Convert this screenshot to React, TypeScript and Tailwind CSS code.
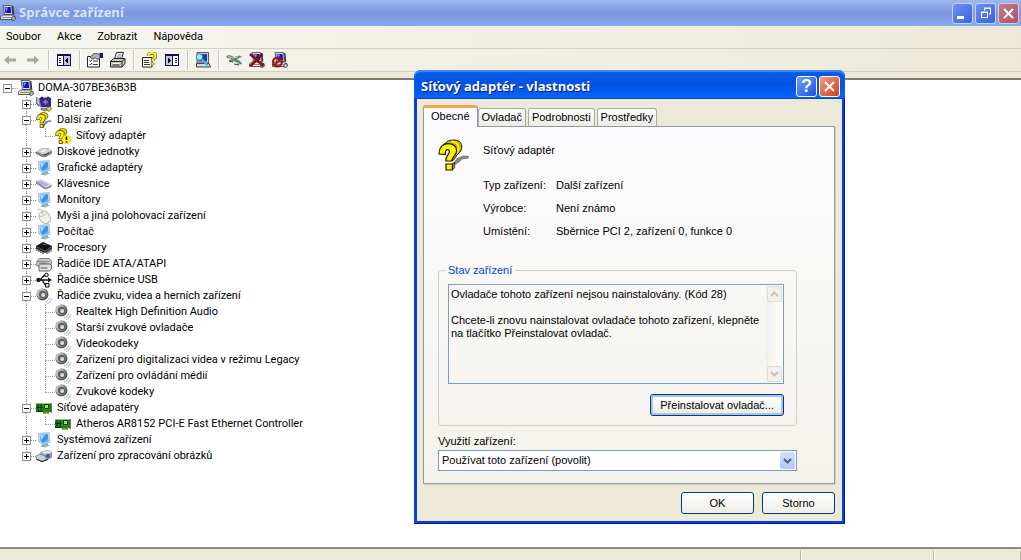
import React from 'react';

type IconProps = { children: React.ReactNode; size?: number };

const Icon: React.FC<IconProps> = ({ children, size = 16 }) => (
  <svg width={size} height={size} viewBox="0 0 16 16" className="shrink-0" aria-hidden="true">
    {children}
  </svg>
);

const ComputerShape = () => (
  <>
    <path d="M3 .5h8.500l1 9H4.500z" fill="#dcdcd4" stroke="#444" strokeWidth=".8" />
    <path d="M4.500 2h6l.7 6H5.500z" fill="#1010d0" />
    <path d="M5 2.500h3l-1.500 4z" fill="#7c9cff" />
    <path d="M12 .8l1.500.7.8 8-1.600.3z" fill="#333" />
    <path d="M0.500 12l2-2h10l2 1.500v2L13 14.500H.5z" fill="#e8e8e0" stroke="#333" strokeWidth=".8" />
    <path d="M2 12.500h9" stroke="#888" />
    <path d="M12 12l3-.5.5 2.500-2 1.500-2-.5z" fill="#bbb" stroke="#222" strokeWidth=".7" />
  </>
);

const ComputerIcon = () => (
  <Icon>
    <ComputerShape />
  </Icon>
);

const BatteryIcon = () => (
  <Icon>
    <path d="M.8 1v6.500L3 10" stroke="#556" strokeWidth="1.200" fill="none" />
    <path d="M2.500 3l1-1 1.500 9-1.500-1z" fill="#a8b4e4" stroke="#446" strokeWidth=".5" />
    <path d="M4 2h10.500v8.500H5.500z" fill="#1c30c0" stroke="#0a1450" strokeWidth=".8" />
    <path d="M5 .8h2V2H5zM11 .8h2V2h-2z" fill="#333" />
    <path d="M9.500 3.500v5M7 6h5" stroke="#f06070" strokeWidth="1.600" />
    <path d="M5 12h5l1 2.500-3 .5-3-1.500z" fill="#9a9a9a" stroke="#444" strokeWidth=".6" />
    <path d="M10 12.500l3.500-2 2.200 2.500-3.200 2.500z" fill="#ecc840" stroke="#5a4a10" strokeWidth=".7" />
  </Icon>
);

const QuestionShape = () => (
  <>
    <path d="M7.500 12.200l2-2.700 3-1.300 3 .3-.2 1.300-3.300.4-1.500 1.500-2 1.300z" fill="#858585" />
    <path
      d="M1.600 4L4.600 1.300C5.800.4 8.800.2 10.600 1.200 12.200 2.200 12.200 4.500 11.300 6 10.500 7.200 9 8 8.800 9.300L7.200 11 7 7l2-3z"
      fill="#c8b800"
      stroke="#1c1800"
      strokeWidth=".5"
    />
    <path d="M6.500 1.200c2 0 3.800 1.200 3.800 3.500 0 1.800-1.700 2.700-2.300 4" stroke="#fff200" strokeWidth="1" fill="none" />
    <path
      d="M.5 7.500C.5 4.200 2.200 2.300 5 2.300c2.800 0 4.300 1.500 4.300 3.600 0 2.600-2.400 3-2.400 5.100H3.900c0-2.700 1.800-3.300 1.800-4.700 0-.7-.4-1-.9-1-.9 0-1.200.9-1.200 2.500z"
      fill="#fff200"
      stroke="#1c1800"
      strokeWidth=".6"
    />
    <path d="M7 12.600l1.300-.9v2.700L7 15.500z" fill="#b8a800" stroke="#1c1800" strokeWidth=".4" />
    <path d="M4 12.500h3.200v3H4z" fill="#fff200" stroke="#1c1800" strokeWidth=".6" />
  </>
);

const QuestionIcon = () => (
  <Icon>
    <QuestionShape />
  </Icon>
);

const UnknownDeviceIcon = () => (
  <Icon>
    <QuestionShape />
    <circle cx="11.500" cy="11.500" r="4.300" fill="#ffee20" stroke="#e0d000" strokeWidth=".5" />
    <path d="M11.500 8.500v3.600M11.500 13.200v1.500" stroke="#111" strokeWidth="1.500" />
  </Icon>
);

const DiskIcon = () => (
  <Icon>
    <path d="M0 8l6-4h6l4 3v2.500l-6 3.500H6L0 10z" fill="#808080" />
    <path d="M0.500 7.500L6 4.200h6l3.500 2.600L10 10H6z" fill="#d0d0d0" />
    <path d="M4 7.200l4-1.700 3 .7-4 2z" fill="#f4f4f4" />
    <path d="M8 11.300l5-2.600" stroke="#333" />
  </Icon>
);

const MonitorIcon = () => (
  <Icon>
    <path d="M6 11l6-1v2.500l1.500 1-4.500 2-5-1 2.500-1.500z" fill="#9fa8b6" />
    <path d="M2.500 1.500L13 .5l1 10L6 12.500 3 10z" fill="#cfe2f4" stroke="#88a6c8" strokeWidth=".7" />
    <path d="M4 2.800l7.800-.8.7 7.500-6 1.500L4.500 9z" fill="#3a94e8" />
    <path d="M4.300 3l5-.5L5 8z" fill="#a8dcff" />
    <path d="M8 10l4-3.500v2.700z" fill="#60b8f4" />
  </Icon>
);

const KeyboardIcon = () => (
  <Icon>
    <path d="M0 5l5-1.500L16 9l-1 2.500-6 2L0 7.500z" fill="#8c88b0" />
    <path d="M0 5l5-1.500L16 9l-6 2.500z" fill="#dcdaf0" />
    <path d="M2 5.500l9 4.500M4 5l9 4.500M5 7.500l3-1M8 9l3-1.200M3 6.500l3-1.200" stroke="#9894c0" strokeWidth=".7" />
  </Icon>
);

const MouseIcon = () => (
  <Icon>
    <path d="M1.500 1.500c3-1 4.500 0 5 3" stroke="#aaa" fill="none" />
    <path d="M4.500 4.500c2.500-2.500 6-1.500 8 1.500s3 6.500.5 8.500-6.500 1-8.500-2-2-6 0-8z" fill="#f4f2ec" stroke="#a8a49c" />
    <path d="M4 8.500c2.500 0 6-1.500 7-4M7.500 7L6 4" stroke="#bbb6ac" fill="none" strokeWidth=".8" />
  </Icon>
);

const ChipIcon = () => (
  <Icon>
    <path d="M0 6l7-4 9 4-7 5z" fill="#111" />
    <path d="M0 6l9 5 7-5v2.500L9 13 0 8.500z" fill="#333" />
    <path d="M1 8v3M3 9v3M5 10v3M7 11v3M11 11v3M13 10v3M15 8.500v3" stroke="#111" />
    <path d="M6 5l3-1 2 1" stroke="#777" fill="none" strokeWidth=".7" />
  </Icon>
);

const IdeIcon = () => (
  <Icon>
    <path d="M.8 5.500L3.500 2.500h9.500l2.300 2v4l-2 1.500H.8z" fill="#c8c8c4" stroke="#666" strokeWidth=".8" />
    <path d="M1 5.500h12.500M3 7.200h8" stroke="#777" strokeWidth=".8" />
    <path d="M3 9.500L4.500 8h9l2 1v4L13 15H3z" fill="#e2e2dc" stroke="#444" strokeWidth=".8" />
    <path d="M4.500 12h7" stroke="#555" />
  </Icon>
);

const UsbIcon = () => (
  <Icon>
    <path d="M1 8h12M4 8l4-4.500h2M6 8l3 4.500h2" stroke="#111" strokeWidth="1.300" fill="none" />
    <circle cx="2.500" cy="8" r="2.300" fill="#222" />
    <path d="M12 5.500L16 8l-4 2.500z" fill="#111" />
    <circle cx="10.500" cy="3" r="1.800" fill="#ddd" stroke="#111" />
    <path d="M9.500 11.500h3.500V15H9.500z" fill="#ddd" stroke="#111" />
  </Icon>
);

const SoundIcon = () => (
  <Icon>
    <ellipse cx="6.500" cy="6.500" rx="6" ry="6" fill="#5e5e5e" />
    <ellipse cx="5.600" cy="5.800" rx="4.800" ry="5" fill="#c4c4c4" />
    <ellipse cx="6.600" cy="6.600" rx="3.800" ry="4" fill="#666" />
    <circle cx="7.200" cy="7" r="2" fill="#dcdcdc" />
    <path d="M9 14c2.500-.3 4-2 4.500-4.500M11 15.500c2.500-.5 4-2.500 4.500-5" stroke="#a4a4ec" fill="none" />
  </Icon>
);

const NetworkIcon = () => (
  <Icon>
    <path d="M0 3.500h15v8.500h-2v2H7v-2H0z" fill="#1d8a1d" />
    <path d="M2 4v7M5 4v7M0 7.500h7M0 11.500h7" stroke="#063006" />
    <path d="M8.500 4.500h4v4h-4z" fill="#a8dc5a" stroke="#0b400b" />
    <path d="M15.200 3v10" stroke="#333" />
    <path d="M7.500 12.500h5v1.500h-5z" fill="#c8b028" />
  </Icon>
);

const CameraIcon = () => (
  <Icon>
    <path d="M5 4l7-1.500 3.500 2v5L8 13l-4-1z" fill="#9aa8b8" stroke="#667" strokeWidth=".7" />
    <path d="M5 4l7-1.500 3.500 2-7 1.500z" fill="#e8ecf0" />
    <path d="M0 8l4-2 6 2.500v3L6 14 0 11z" fill="#ccd0d8" stroke="#666" strokeWidth=".7" />
    <circle cx="12" cy="8" r="2" fill="#3858a0" />
    <path d="M0.500 11l5.500 2.500 6-2" stroke="#222" fill="none" />
  </Icon>
);

/* toolbar drawings */

const BackIcon = () => (
  <Icon>
    <path d="M2 8l5-4.500v3h7v3H7v3z" fill="#aca899" />
  </Icon>
);

const ForwardIcon = () => (
  <Icon>
    <path d="M14 8L9 3.500v3H2v3h7v3z" fill="#aca899" />
  </Icon>
);

const TreePaneIcon = () => (
  <Icon>
    <g shapeRendering="crispEdges">
      <path d="M1 2h14v12H1z" fill="#101060" />
      <path d="M2 4h5v9H2z" fill="#fff" />
      <path d="M8 4h6v9H8z" fill="#c8c8d8" />
      <path d="M3 6h2v1H3zM3 8h2v1H3zM3 10h2v1H3z" fill="#101060" />
    </g>
    <path d="M12 5.500v6L9 8.500z" fill="#000" />
  </Icon>
);

const ActionPaneIcon = () => (
  <Icon>
    <g shapeRendering="crispEdges">
      <path d="M1 2h14v12H1z" fill="#101060" />
      <path d="M2 4h6v9H2z" fill="#c8c8d8" />
      <path d="M9 4h5v9H9z" fill="#fff" />
      <path d="M11 6h2v1h-2zM11 8h2v1h-2zM11 10h2v1h-2z" fill="#101060" />
    </g>
    <path d="M4 5.500v6l3-3z" fill="#000" />
  </Icon>
);

const PropertiesIcon = () => (
  <Icon>
    <path d="M.5 4.500h12v10.500H.5z" fill="#fff" stroke="#222" />
    <path d="M2.500 8.500l1 1 1.500-2M2.500 12l1 1 1.500-2M6 9h5M6 12.500h5" stroke="#222" fill="none" strokeWidth=".9" />
    <path d="M3 5l4-3.500 6 .5v4l-2 1.500L8.500 6 5 7z" fill="#b4b4ac" stroke="#333" strokeWidth=".8" />
    <path d="M13 1h3v5h-3z" fill="#141490" />
  </Icon>
);

const PrintIcon = () => (
  <Icon>
    <path d="M4.500 7l2-6.500h7L11.500 7z" fill="#fff" stroke="#222" />
    <path d="M7.500 3h4M6.500 5h4.500" stroke="#555" strokeWidth=".8" />
    <path d="M.5 9.500l3-3h11.500v5L12 15H.5z" fill="#c8c8b8" stroke="#222" />
    <path d="M.5 9.500H12l3-3M12 9.500V15M2.500 13h7" stroke="#222" fill="none" />
    <path d="M2.500 11.500h7" stroke="#f4f4f0" />
  </Icon>
);

const HelpIcon = () => (
  <Icon>
    <path d="M1.500 5.500h9.500V15H1.500z" fill="#fff" stroke="#222" />
    <path d="M3 8.500h5M3 10.500h5M3 12.500h6" stroke="#222" strokeWidth=".9" />
    <path d="M7.500 4c0-4 7-4 7 0 0 2.500-3 2.500-3 5M11.500 10.500v2.500" stroke="#5c5400" strokeWidth="3.400" fill="none" />
    <path d="M7.500 4c0-4 7-4 7 0 0 2.500-3 2.500-3 5M11.500 10.800v2" stroke="#ffee10" strokeWidth="2.200" fill="none" />
  </Icon>
);

const ScanIcon = () => (
  <Icon>
    <path d="M2 .5h11.500v10.500H2z" fill="#d4d4c8" stroke="#556" />
    <path d="M3.500 2h8.500v7.500H3.500z" fill="#1838c0" />
    <path d="M1.500 11.500h12.500l1.500 3.500H1.500z" fill="#d8d8cc" stroke="#444" />
    <circle cx="4.500" cy="5" r="3.200" fill="#a8ecff" stroke="#208cb8" />
    <path d="M7 7.500l5.500 6" stroke="#48b8e0" strokeWidth="2.200" />
  </Icon>
);

const UpdateIcon = () => (
  <Icon>
    <path d="M0 4l4-1 4 2 6-1.500 2 1.500-5 2 4 3 1 2-3 .5-5-3-4 .5-1-2 3-1-5-1z" fill="#6d8468" />
    <path d="M2 4.500l4 1.500 6-1M7 9l6 2.500" stroke="#c8d4c0" fill="none" />
    <path d="M8 12l5 1M3 9l4 1" stroke="#39443a" />
  </Icon>
);

const UninstallIcon = () => (
  <Icon>
    <ComputerShape />
    <path d="M1 2l13.500 12M13.500 2L1.500 14" stroke="#8c0c14" strokeWidth="2.600" />
  </Icon>
);

const DisableIcon = () => (
  <Icon>
    <ComputerShape />
    <circle cx="5.500" cy="10" r="4.400" fill="none" stroke="#a01018" strokeWidth="2.200" />
    <path d="M2.500 13l6-6" stroke="#a01018" strokeWidth="2" />
  </Icon>
);

type DeviceNode = {
  name: string;
  icon: React.FC;
  expanded?: boolean;
  children?: DeviceNode[];
};

const devices: DeviceNode[] = [
  { name: 'Baterie', icon: BatteryIcon },
  {
    name: 'Další zařízení',
    icon: QuestionIcon,
    expanded: true,
    children: [{ name: 'Síťový adaptér', icon: UnknownDeviceIcon }],
  },
  { name: 'Diskové jednotky', icon: DiskIcon },
  { name: 'Grafické adaptéry', icon: MonitorIcon },
  { name: 'Klávesnice', icon: KeyboardIcon },
  { name: 'Monitory', icon: MonitorIcon },
  { name: 'Myši a jiná polohovací zařízení', icon: MouseIcon },
  { name: 'Počítač', icon: MonitorIcon },
  { name: 'Procesory', icon: ChipIcon },
  { name: 'Řadiče IDE ATA/ATAPI', icon: IdeIcon },
  { name: 'Řadiče sběrnice USB', icon: UsbIcon },
  {
    name: 'Řadiče zvuku, videa a herních zařízení',
    icon: SoundIcon,
    expanded: true,
    children: [
      { name: 'Realtek High Definition Audio', icon: SoundIcon },
      { name: 'Starší zvukové ovladače', icon: SoundIcon },
      { name: 'Videokodeky', icon: SoundIcon },
      { name: 'Zařízení pro digitalizaci videa v režimu Legacy', icon: SoundIcon },
      { name: 'Zařízení pro ovládání médií', icon: SoundIcon },
      { name: 'Zvukové kodeky', icon: SoundIcon },
    ],
  },
  {
    name: 'Síťové adapatéry',
    icon: NetworkIcon,
    expanded: true,
    children: [{ name: 'Atheros AR8152 PCI-E Fast Ethernet Controller', icon: NetworkIcon }],
  },
  { name: 'Systémová zařízení', icon: MonitorIcon },
  { name: 'Zařízení pro zpracování obrázků', icon: CameraIcon },
];

const Expander: React.FC<{ expanded?: boolean }> = ({ expanded }) => (
  <button
    type="button"
    aria-label={expanded ? 'Sbalit' : 'Rozbalit'}
    className="relative flex size-[9px] shrink-0 items-center justify-center border border-[#8f8f86] bg-white"
  >
    <span className="h-px w-[5px] bg-black" />
    {!expanded && <span className="absolute h-[5px] w-px bg-black" />}
  </button>
);

// One 19px step of the dotted guide lines in front of a row
const Guide: React.FC<{ last?: boolean; children?: React.ReactNode }> = ({ last, children }) => (
  <span className="relative flex h-4 w-[19px] shrink-0 items-center justify-center">
    <span
      className={`absolute left-[9px] top-0 border-l border-dotted border-[#a0a098] ${last ? 'h-2' : 'h-4'}`}
    />
    <span className="absolute left-[9px] right-0 top-2 border-t border-dotted border-[#a0a098]" />
    {children}
  </span>
);

const DeviceTree = () => (
  <ul className="text-[11px] leading-4 text-black">
    <li>
      <div className="flex h-4 items-center pl-[3px]">
        <Expander expanded />
        <span className="w-[6px] border-t border-dotted border-[#a0a098]" />
        <ComputerIcon />
        <span className="whitespace-nowrap pl-1">DOMA-307BE36B3B</span>
      </div>
      <ul className="pl-[17px]">
        {devices.map((device, i) => {
          const last = i === devices.length - 1;
          return (
            <li key={device.name}>
              <div className="flex h-4 items-center">
                <Guide last={last}>
                  <Expander expanded={device.expanded} />
                </Guide>
                <device.icon />
                <span className="whitespace-nowrap pl-[5px]">{device.name}</span>
              </div>
              {device.children && (
                <ul className="ml-[9px] border-l border-dotted border-[#a0a098] pl-[9px]">
                  {device.children.map((child, j) => (
                    <li key={child.name} className="flex h-4 items-center">
                      <Guide last={j === device.children!.length - 1} />
                      <child.icon />
                      <span className="whitespace-nowrap pl-[5px]">{child.name}</span>
                    </li>
                  ))}
                </ul>
              )}
            </li>
          );
        })}
      </ul>
    </li>
  </ul>
);

const toolGroups = [
  [
    { label: 'Zpět', icon: BackIcon },
    { label: 'Vpřed', icon: ForwardIcon },
  ],
  [{ label: 'Strom konzoly', icon: TreePaneIcon }],
  [
    { label: 'Vlastnosti', icon: PropertiesIcon },
    { label: 'Tisk', icon: PrintIcon },
  ],
  [
    { label: 'Nápověda', icon: HelpIcon },
    { label: 'Podokno akcí', icon: ActionPaneIcon },
  ],
  [{ label: 'Vyhledat změny hardwaru', icon: ScanIcon }],
  [
    { label: 'Aktualizovat ovladač', icon: UpdateIcon },
    { label: 'Odinstalovat', icon: UninstallIcon },
    { label: 'Zakázat', icon: DisableIcon },
  ],
];

const Toolbar = () => (
  <div className="flex h-[23px] shrink-0 items-center border-b border-[#cfccbb] bg-linear-to-r from-[#f6f6f1] to-[#ece9d8]">
    {toolGroups.map((group, i) => (
      <div key={i} className="flex items-center">
        {i > 0 && <span className="ml-[2px] mr-1 h-[20px] w-[2px] border-l border-[#c9c6b5] bg-white" />}
        {group.map((tool) => (
          <button
            key={tool.label}
            type="button"
            aria-label={tool.label}
            className="flex h-[22px] w-[23px] items-center pl-[2px]"
          >
            <tool.icon />
          </button>
        ))}
      </div>
    ))}
  </div>
);

const CloseGlyph = () => (
  <svg width="13" height="13" viewBox="0 0 13 13" aria-hidden="true">
    <path d="M2 2l9 9M11 2l-9 9" stroke="#fff" strokeWidth="2" />
  </svg>
);

const TitleBar = () => (
  <header className="flex h-[26px] shrink-0 items-center bg-linear-to-b from-[#9db9ee] via-[#7b96e0] to-[#84abec] pr-[2px]">
    <ComputerIcon />
    <h1 className="flex-1 pl-[3px] font-['Open_Sans','Noto_Sans',sans-serif] text-[13px] font-bold text-[#d9e5fa]">
      Správce zařízení
    </h1>
    <div className="flex gap-[2px]">
      <button
        type="button"
        aria-label="Minimalizovat"
        className="flex size-[21px] items-end rounded-[3px] border border-[#c5d3f6] bg-linear-to-br from-[#6d92ee] to-[#3a62dc] pb-1 pl-1"
      >
        <span className="h-[3px] w-[7px] bg-white" />
      </button>
      <button
        type="button"
        aria-label="Obnovit"
        className="flex size-[21px] items-center justify-center rounded-[3px] border border-[#c5d3f6] bg-linear-to-br from-[#6d92ee] to-[#3a62dc]"
      >
        <svg width="12" height="12" viewBox="0 0 12 12" fill="none" stroke="#fff" aria-hidden="true">
          <path d="M1.500 5.500h6v5h-6zM1 5h7M4.500 3.500V1.500h6v5.500H9M4 1h7" />
        </svg>
      </button>
      <button
        type="button"
        aria-label="Zavřít"
        className="flex size-[21px] items-center justify-center rounded-[3px] border border-[#d5cbe8] bg-linear-to-br from-[#c07a90] to-[#ac5460]"
      >
        <CloseGlyph />
      </button>
    </div>
  </header>
);

const MenuBar = () => (
  <nav className="flex h-[23px] shrink-0 items-center gap-4 border-b border-[#d2cfbf] bg-linear-to-r from-[#f6f6f1] to-[#ece9d8] pl-[6px] text-[11px] text-black">
    <a href="#soubor">Soubor</a>
    <a href="#akce">Akce</a>
    <a href="#zobrazit">Zobrazit</a>
    <a href="#napoveda">Nápověda</a>
  </nav>
);

const tabs = ['Ovladač', 'Podrobnosti', 'Prostředky'];

const facts = [
  ['Typ zařízení:', 'Další zařízení'],
  ['Výrobce:', 'Není známo'],
  ['Umístění:', 'Sběrnice PCI 2, zařízení 0, funkce 0'],
];

const statusText =
  'Ovladače tohoto zařízení nejsou nainstalovány. (Kód 28)\n\nChcete-li znovu nainstalovat ovladače tohoto zařízení, klepněte na tlačítko Přeinstalovat ovladač.';

const buttonClass =
  'h-[22px] rounded-[3px] border border-[#003c74] bg-linear-to-b from-white to-[#eeede6] text-center';

const ScrollButton: React.FC<{ label: string; d: string }> = ({ label, d }) => (
  <button
    type="button"
    aria-label={label}
    disabled
    className="flex h-4 w-[15px] items-center justify-center rounded-[2px] border border-[#dddccf] bg-[#f1f0ea]"
  >
    <svg width="9" height="6" viewBox="0 0 9 6" fill="none" stroke="#c6c5bc" strokeWidth="2" aria-hidden="true">
      <path d={d} />
    </svg>
  </button>
);

const PropertiesDialog = () => (
  <section
    role="dialog"
    aria-labelledby="dialog-title"
    className="absolute left-[414px] top-[70px] w-[431px] rounded-t-[7px] bg-[#0a3fd8] px-[3px] pb-[3px] font-['Liberation_Sans',Arial,sans-serif] text-[11px] leading-[13px] text-black shadow-[inset_-1px_-1px_0_#001d96]"
  >
    <div className="-mx-[3px] flex h-[29px] items-center rounded-t-[7px] bg-linear-to-b from-[#0a5be8] via-[#0453e4] to-[#0566fb] pl-[7px] pr-[5px] pt-[3px] shadow-[inset_0_2px_1px_#3a8cff,inset_0_-1px_0_#0444c8]">
      <h2
        id="dialog-title"
        className="flex-1 font-['Open_Sans','Noto_Sans',sans-serif] text-[13px] font-bold text-white [text-shadow:1px_1px_#0a1883]"
      >
        Síťový adaptér - vlastnosti
      </h2>
      <div className="flex gap-[2px]">
        <button
          type="button"
          aria-label="Nápověda"
          className="size-[21px] rounded-[3px] border border-white bg-linear-to-br from-[#6f9bf8] to-[#1c4fe0] text-[18px] font-bold leading-[19px] text-white"
        >
          ?
        </button>
        <button
          type="button"
          aria-label="Zavřít"
          className="flex size-[21px] items-center justify-center rounded-[3px] border border-white bg-linear-to-br from-[#f09a80] to-[#cc3a10]"
        >
          <CloseGlyph />
        </button>
      </div>
    </div>

    <div className="bg-[#ece9d8] pb-[7px] pl-[6px] pr-[7px] pt-[6px]">
      <div role="tablist" className="flex items-end gap-[2px]">
        <button
          type="button"
          role="tab"
          aria-selected="true"
          className="relative z-10 -mb-px -mr-[2px] h-[22px] rounded-t-[3px] border border-b-0 border-t-[3px] border-[#919b9c] border-t-[#f0a848] bg-[#fcfcfe] px-[7px] pb-[2px]"
        >
          Obecné
        </button>
        {tabs.map((tab) => (
          <button
            key={tab}
            type="button"
            role="tab"
            aria-selected="false"
            className="h-[18px] rounded-t-[3px] border border-b-0 border-[#a5abab] bg-linear-to-b from-white to-[#ecebe4] px-[3px]"
          >
            {tab}
          </button>
        ))}
      </div>

      <div
        role="tabpanel"
        className="border border-[#919b9c] bg-linear-to-b from-[#fcfcfe] to-[#f3f2ec] pb-3 pl-[14px] pr-[37px] pt-3 shadow-[1px_1px_0_#d6d3c2]"
      >
        <div className="flex gap-[13px]">
          <Icon size={32}>
            <QuestionShape />
          </Icon>
          <p className="pt-[5px]">Síťový adaptér</p>
        </div>
        <dl className="flex flex-col gap-[10px] pl-[45px] pt-[8px]">
          {facts.map(([term, value]) => (
            <div key={term} className="flex">
              <dt className="w-[73px]">{term}</dt>
              <dd>{value}</dd>
            </div>
          ))}
        </dl>

        <fieldset className="mt-[26px] rounded-[4px] border border-[#d0d0bf] pb-[9px] pl-[9px] pr-3">
          <legend className="-ml-[3px] px-[3px] text-[#0046d5]">Stav zařízení</legend>
          <div className="mt-[7px] flex h-[100px] border border-[#7f9db9]">
            <textarea
              readOnly
              aria-label="Stav zařízení"
              value={statusText}
              className="min-w-0 flex-1 resize-none overflow-hidden bg-transparent pl-[2px] pt-[3px] outline-none"
            />
            <div className="flex w-[17px] flex-col items-center justify-between bg-linear-to-r from-[#f0f0e8] to-white py-px">
              <ScrollButton label="Nahoru" d="M1 5l3.500-3.500L8 5" />
              <ScrollButton label="Dolů" d="M1 1l3.500 3.500L8 1" />
            </div>
          </div>
          <div className="flex justify-end pt-[10px]">
            <button type="button" className={`${buttonClass} px-[9px] shadow-[inset_0_0_0_2px_#a9c3f0]`}>
              Přeinstalovat ovladač...
            </button>
          </div>
        </fieldset>

        <label htmlFor="usage" className="block pb-[2px] pt-[9px]">
          Využití zařízení:
        </label>
        <div className="relative">
          <select
            id="usage"
            className="block h-[21px] w-full appearance-none border border-[#7f9db9] bg-white pl-[3px] outline-none"
          >
            <option>Používat toto zařízení (povolit)</option>
          </select>
          <span className="pointer-events-none absolute right-[2px] top-[2px] flex h-[17px] w-[15px] items-center justify-center rounded-[2px] bg-linear-to-b from-[#d2defc] to-[#b4c8f6]">
            <svg width="9" height="6" viewBox="0 0 9 6" fill="none" stroke="#4d6185" strokeWidth="2" aria-hidden="true">
              <path d="M1 1l3.500 3.500L8 1" />
            </svg>
          </span>
        </div>
      </div>

      <div className="flex justify-end gap-2 pt-[8px]">
        <button type="button" className={`${buttonClass} w-[73px]`}>
          OK
        </button>
        <button type="button" className={`${buttonClass} w-[73px]`}>
          Storno
        </button>
      </div>
    </div>
  </section>
);

const StatusBar = () => (
  <footer className="flex h-[13px] shrink-0 border-t-2 border-[#8d8b80] bg-[#ece9d8] pt-[2px]">
    <span className="flex-1 border-r border-[#b9b6a5]" />
    <span className="w-[133px] border-l border-r border-l-white border-r-[#b9b6a5]" />
    <span className="w-[87px] border-l border-r border-l-white border-r-[#b9b6a5]" />
  </footer>
);

const App: React.FC = () => {
  return (
    <div className="relative flex h-screen flex-col overflow-hidden bg-[#ece9d8] font-['Roboto','Noto_Sans',sans-serif]">
      <TitleBar />
      <MenuBar />
      <Toolbar />
      <main className="mt-[6px] min-h-0 flex-1 overflow-hidden border-t-2 border-[#7d7b70] bg-white">
        <DeviceTree />
      </main>
      <StatusBar />
      <PropertiesDialog />
    </div>
  );
};

export default App;
